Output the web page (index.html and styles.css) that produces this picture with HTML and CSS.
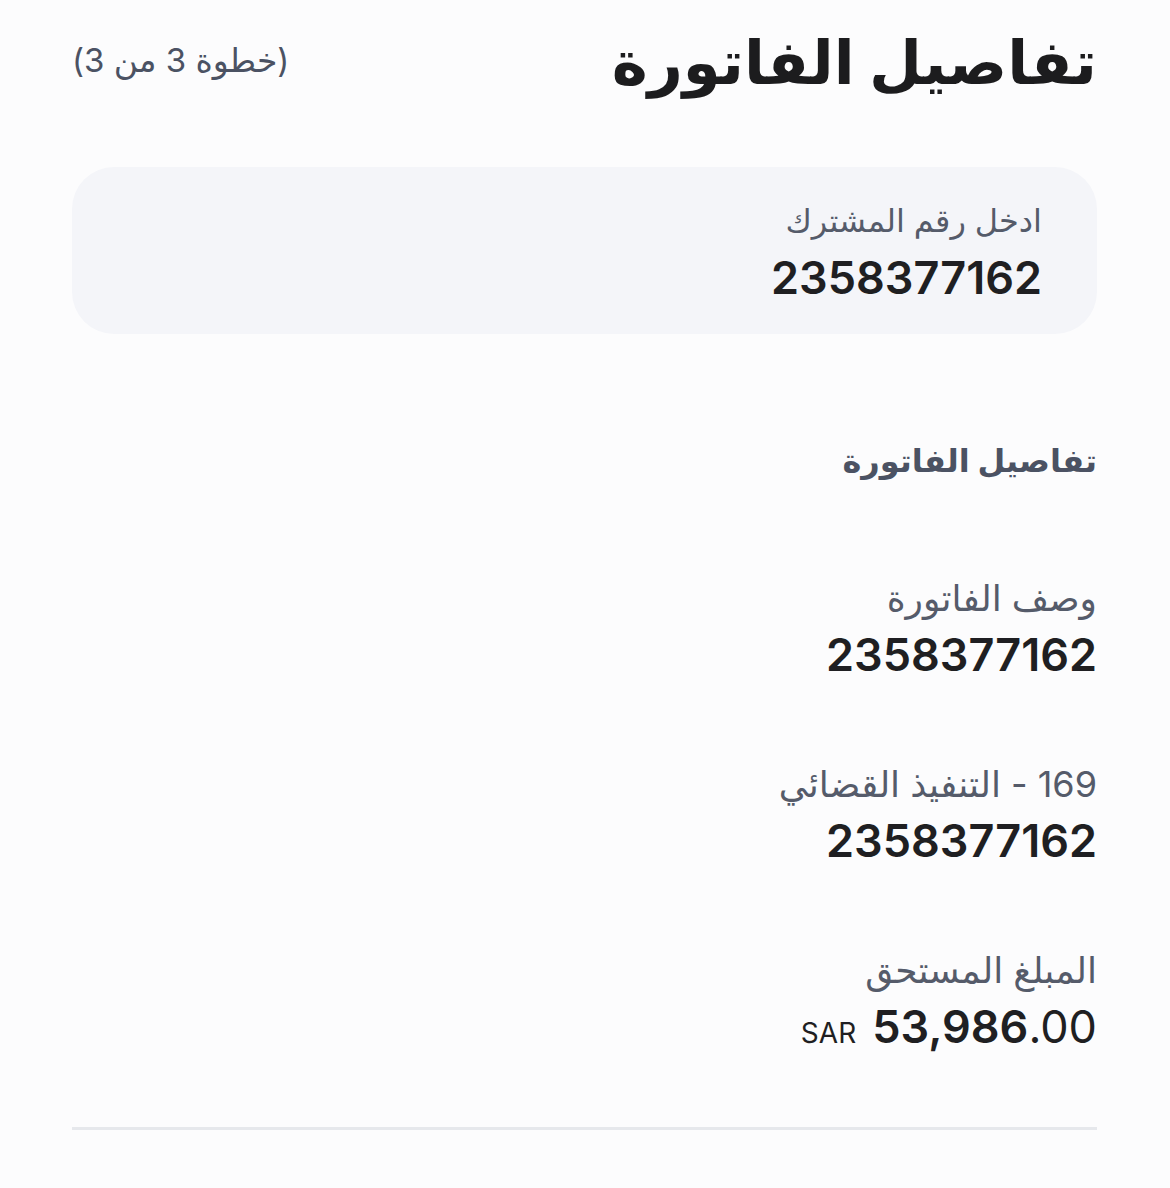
FILE: index.html
```
<!DOCTYPE html>
<html lang="ar" dir="rtl">
<head>
  <meta charset="UTF-8">
  <meta name="viewport" content="width=device-width, initial-scale=1.0">
  <title>تفاصيل الفاتورة</title>
  <link rel="stylesheet" href="styles.css">
</head>
<body>
  <div class="page">
    <div class="header">
      <h1>تفاصيل الفاتورة</h1>
      <span class="step">(خطوة 3 من 3)</span>
    </div>

    <div class="input-card">
      <div class="input-label">ادخل رقم المشترك</div>
      <div class="input-value">2358377162</div>
    </div>

    <h2 class="section-title">تفاصيل الفاتورة</h2>

    <div class="field">
      <div class="field-label">وصف الفاتورة</div>
      <div class="field-value">2358377162</div>
    </div>

    <div class="field">
      <div class="field-label">169 - التنفيذ القضائي</div>
      <div class="field-value">2358377162</div>
    </div>

    <div class="field">
      <div class="field-label">المبلغ المستحق</div>
      <div class="field-value amount"><span class="currency">SAR</span><span class="amount-main">53,986</span><span class="amount-dec">.00</span></div>
    </div>

    <div class="divider"></div>
  </div>
</body>
</html>
```

FILE: styles.css
```
body {
  margin: 0;
  background-color: #fcfcfd;
  color: #1f1f22;
  font-family: Inter, "DejaVu Sans", sans-serif;
}
.page {
  padding: 0 73px 0 72px;
}
.header {
  display: flex;
  justify-content: space-between;
  align-items: center;
  height: 124px;
}
.header h1 {
  margin: 0;
  font-size: 61px;
  font-weight: bold;
  color: #1c1c1e;
}
.step {
  font-size: 33px;
  color: #4b5263;
  padding-bottom: 4px;
}
.input-card {
  margin-top: 43px;
  height: 167px;
  box-sizing: border-box;
  background: #f4f5f9;
  border-radius: 42px;
  padding: 32px 55px 0 55px;
}
.input-label {
  font-size: 32px;
  color: #555b6a;
  line-height: 44px;
}
.input-value {
  font-size: 45px;
  font-weight: 600;
  line-height: 70px;
  direction: ltr;
  text-align: right;
}
.section-title {
  margin: 100px 0 0;
  font-size: 32px;
  font-weight: bold;
  color: #4b5263;
  line-height: 54px;
}
.field {
  margin-top: 83px;
}
.field + .field {
  margin-top: 72px;
}
.field-label {
  font-size: 36px;
  color: #555b6a;
  line-height: 54px;
}
.field-value {
  font-size: 45px;
  font-weight: 600;
  line-height: 60px;
  direction: ltr;
  text-align: right;
}
.amount-dec {
  font-weight: 400;
}
.currency {
  font-size: 28px;
  font-weight: 400;
  margin-right: 16px;
}
.divider {
  margin-top: 64px;
  border-top: 3px solid #e6e8ec;
}
```
